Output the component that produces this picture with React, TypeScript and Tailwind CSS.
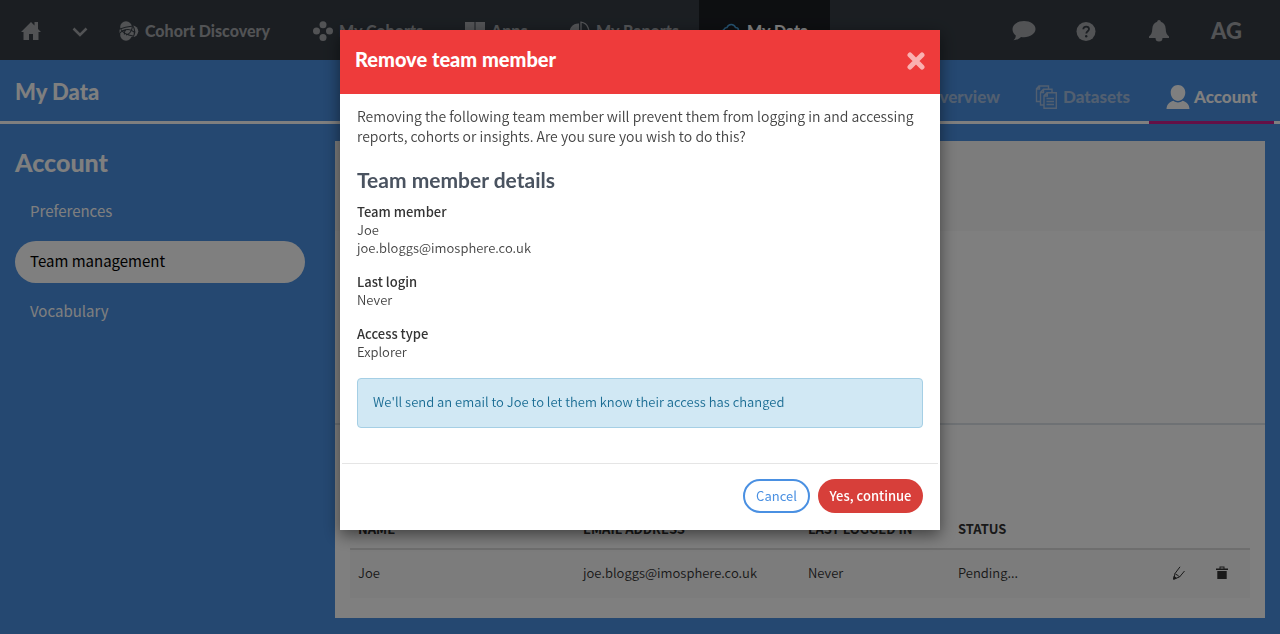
import React from "react";

const HEADING = "font-['Lato','Open_Sans',sans-serif]";
const BODY = "font-['Noto_Sans_CJK_SC','Open_Sans',sans-serif]";

const HomeIcon = () => (
  <svg className="h-5 w-5" viewBox="0 0 20 20" fill="currentColor">
    <path d="M10 1 0 11h2.500v8H8v-6h4v6h5.500v-8H20l-3-3V1h-3.500v3.500z" />
  </svg>
);

const ChevronIcon = () => (
  <svg className="h-4 w-4" viewBox="0 0 16 16" fill="none" stroke="currentColor" strokeWidth="2.500">
    <path d="M1.500 4.500 8 11l6.500-6.500" />
  </svg>
);

const DiscoveryIcon = () => (
  <svg className="h-5 w-5" viewBox="0 0 20 20">
    <g fill="currentColor">
      <circle cx="7" cy="6" r="5.800" />
      <circle cx="7" cy="14" r="5.800" />
      <circle cx="13.500" cy="10.300" r="5.800" />
      <path d="M.500 8h8v5h-8z" />
    </g>
    <g fill="none" stroke="#363d45" strokeWidth="1.100">
      <path d="M0 8.300c4-1.500 8-2.500 14-3.300M0 13.300c2-3 5-4.800 9-4.800 2.500 0 4.500 1 6 2.500M2 8.500c2 3.500 6 5.500 12 6.500M7 14c3.500-1 6-4 6.500-9M5.500 13.500c-.500-2 0-3.500 1.500-5" />
      <path d="M13.300 4c3 4 3 9 0 13" />
    </g>
  </svg>
);

const CohortsIcon = () => (
  <svg className="h-5 w-5" viewBox="0 0 20 20" fill="currentColor">
    <circle cx="10" cy="3.800" r="3.500" />
    <circle cx="3.500" cy="10" r="3.500" />
    <circle cx="16.500" cy="10" r="3.500" />
    <circle cx="10" cy="16.500" r="3.500" />
  </svg>
);

const AppsIcon = () => (
  <svg className="h-5 w-5" viewBox="0 0 20 20" fill="currentColor">
    <path d="M0 1h9.500v8.500H0zM10.500 1H20v8.500h-9.500zM0 10.500h9.500V19H0zM10.500 10.500H20V19h-9.500z" />
  </svg>
);

const ReportsIcon = () => (
  <svg className="h-5 w-5" viewBox="0 0 20 20">
    <path d="M9 2.500V11l6.500 6A9 9 0 1 1 9 2.500z" fill="currentColor" />
    <path d="M11 1.200V10l6 5.500A9 9 0 0 0 11 1.200z" fill="none" stroke="currentColor" strokeWidth="1.300" />
  </svg>
);

const CloudIcon = () => (
  <svg className="h-5 w-5 text-[#4aa3df]" viewBox="0 0 20 20" fill="none" stroke="currentColor" strokeWidth="1.500">
    <path d="M4.500 16a4 4 0 0 1-1.500-7.500A3 3 0 0 1 6 6.500a4.500 4.500 0 0 1 8.500 0 3 3 0 0 1 3 3A3.500 3.500 0 0 1 16 16z" />
  </svg>
);

const ChatIcon = () => (
  <svg className="h-5 w-6" viewBox="0 0 24 20" fill="currentColor">
    <path d="M12 0c6.300 0 11.500 3.500 11.500 8S18.300 16.200 12 16.200c-1 0-2-.100-3-.300C7 18 4.500 19 1.500 19.300c1.500-1.300 2.200-2.800 2.300-4.800C1.700 13 .500 10.700.500 8 .500 3.500 5.700 0 12 0z" />
  </svg>
);

const HelpIcon = () => (
  <svg className="h-5 w-5" viewBox="0 0 20 20">
    <circle cx="10" cy="10.500" r="9.500" fill="currentColor" />
    <path d="M7.300 8.300c0-3.600 5.700-3.400 5.700-.200 0 2.200-2.700 2.200-2.700 4.500" fill="none" stroke="#363d45" strokeWidth="1.800" />
    <circle cx="10.200" cy="15.200" r="1.200" fill="#363d45" />
  </svg>
);

const BellIcon = () => (
  <svg className="h-6 w-5" viewBox="0 0 20 24" fill="currentColor">
    <path d="M10 1c1 0 1.700.700 1.800 1.800 3 .900 4.700 3.400 4.900 7 .200 4 1 6 3.300 7.700V19h-6.500a3.500 3.500 0 0 1-7 0H0v-1.500C2.300 15.800 3.100 13.800 3.300 9.800c.200-3.600 1.900-6.100 4.900-7C8.300 1.700 9 1 10 1z" />
  </svg>
);

const DatasetsIcon = () => (
  <svg className="h-6 w-6" viewBox="0 0 24 24" fill="none" stroke="currentColor" strokeWidth="1.400">
    <path d="M12 7.700h9.300v15.600H9V10.700zM12.300 7.700v3.300H9M11.500 13.500h7.500M11.500 16.500h7.500M11.500 19.500h7.500" />
    <path d="M17 7.500V4.300H8.500l-3 3V20H9M8.500 4.500v3H5.500M13.500 4V1H4L1.500 3.800V16.500h4M4.500 1v3H1.500" />
  </svg>
);

const PersonIcon = () => (
  <svg className="h-6 w-6" viewBox="0 0 24 24" fill="currentColor">
    <path d="M12 0c4.300 0 7.300 3.200 7.300 7.500 0 4.600-3.300 8.500-7.300 8.500s-7.300-3.900-7.300-8.500C4.700 3.200 7.700 0 12 0zM.500 24c.200-4.300 2.700-6.900 6.900-8.200 2.900 2.200 6.300 2.200 9.200 0 4.200 1.300 6.700 3.900 6.900 8.200z" />
  </svg>
);

const PenIcon = () => (
  <svg className="h-[14px] w-3" viewBox="0 0 12 14" fill="none" stroke="currentColor" strokeWidth="1">
    <path d="M.800 13 2 7.500 7 .800M.800 13l5.700-2L11.500 5M2 7.500c1 1.700 3 1 4.500 3.500" />
    <path d="M.500 13.300 1.200 10l2 2.400z" fill="currentColor" />
  </svg>
);

const TrashIcon = () => (
  <svg className="h-[14px] w-3" viewBox="0 0 12 14" fill="currentColor">
    <path d="M0 2.500h3.500V.500h5v2H12V4H0zM4.500 1.500v1h3v-1zM1.300 5h9.400v8H1.300z" />
  </svg>
);

const CloseIcon = () => (
  <svg
    className="h-[18px] w-[18px]"
    viewBox="0 0 18 18"
    fill="none"
    stroke="currentColor"
    strokeWidth="5"
    strokeLinecap="round"
  >
    <path d="M3 3l12 12M15 3 3 15" />
  </svg>
);

const navItems = [
  { label: "Cohort Discovery", icon: <DiscoveryIcon />, width: "w-[194px]" },
  { label: "My Cohorts", icon: <CohortsIcon />, width: "w-[152px]" },
  { label: "Apps", icon: <AppsIcon />, width: "w-[105px]" },
  { label: "My Reports", icon: <ReportsIcon />, width: "w-[150px]" },
];

const TopNav = () => (
  <nav className={`flex h-[60px] items-center bg-[#363d45] text-[#a4a6aa] ${HEADING}`}>
    <a href="#home" aria-label="Home" className="ml-[21px] pt-[2px]">
      <HomeIcon />
    </a>
    <button aria-label="Switch workspace" className="ml-[31px] mt-1">
      <ChevronIcon />
    </button>
    <div className="ml-[10px] flex h-full">
      {navItems.map((item) => (
        <a
          key={item.label}
          href="#nav"
          className={`flex items-center gap-[6px] whitespace-nowrap pl-[21px] pt-[2px] text-base font-black ${item.width}`}
        >
          {item.icon}
          {item.label}
        </a>
      ))}
      <a
        href="#data"
        className="flex w-[131px] items-center gap-[6px] whitespace-nowrap bg-[#1b1e23] pl-[22px] pt-[2px] text-base font-black text-white"
      >
        <CloudIcon />
        My Data
      </a>
    </div>
    <div className="ml-auto flex items-center pr-[38px] pt-[2px]">
      <button aria-label="Messages" className="mr-10">
        <ChatIcon />
      </button>
      <button aria-label="Help" className="mr-[53px]">
        <HelpIcon />
      </button>
      <button aria-label="Notifications" className="mr-[42px]">
        <BellIcon />
      </button>
      <button className="text-[22px] font-black leading-6">AG</button>
    </div>
  </nav>
);

const SubNav = () => (
  <header className={`flex h-16 items-stretch justify-between border-b-[3px] border-white ${HEADING}`}>
    <h1 className="pl-[15px] pt-4 text-[22px] font-black leading-8 text-white">My Data</h1>
    <div className="-mb-[3px] mr-[6px] flex text-[17px] font-black text-[#a4bfe0]">
      <a href="#overview" className="flex items-center pr-[18px] pt-[10px]">
        Overview
      </a>
      <a href="#datasets" className="flex w-[131px] items-center gap-1 pl-[17px] pt-[10px]">
        <DatasetsIcon />
        Datasets
      </a>
      <a
        href="#account"
        className="flex w-[125px] items-center gap-1 border-b-[3px] border-[#c8208c] pl-[17px] pt-[13px] text-white"
      >
        <PersonIcon />
        Account
      </a>
    </div>
  </header>
);

const Sidebar = () => (
  <aside className="w-[305px] shrink-0 pl-[15px] text-white">
    <h2 className={`pt-[22px] text-[25px] font-black leading-8 ${HEADING}`}>Account</h2>
    <ul className="mt-[13px] flex flex-col gap-2 text-[15px] leading-10">
      <li>
        <a href="#preferences" className="block rounded-full px-[15px] pb-[2px]">
          Preferences
        </a>
      </li>
      <li>
        <a href="#team" className="block rounded-full bg-white px-[15px] pb-[2px] text-black">
          Team management
        </a>
      </li>
      <li>
        <a href="#vocabulary" className="block rounded-full px-[15px] pb-[2px]">
          Vocabulary
        </a>
      </li>
    </ul>
  </aside>
);

const TeamPanel = () => (
  <main className="ml-[30px] mr-[15px] mt-[17px] flex-1 bg-white pb-5">
    <div className="h-[90px] bg-[#f9f9f9]" />
    <div className="h-[194px] border-b-2 border-[#dde3e8]" />
    <div className="px-[15px] pt-[85px]">
      <table className="w-full table-fixed text-left text-[13px] text-[#333]">
        <thead>
          <tr className="h-[39px] border-b-2 border-[#ddd] uppercase">
            <th className="w-1/4 px-2 font-bold">Name</th>
            <th className="w-1/4 px-2 font-bold">Email address</th>
            <th className="w-1/6 px-2 font-bold">Last logged in</th>
            <th className="w-1/6 px-2 font-bold">Status</th>
            <th className="w-1/6" aria-label="Actions" />
          </tr>
        </thead>
        <tbody>
          <tr className="h-[49px] bg-[#f9f9f9] font-[350]">
            <td className="px-2 pb-[3px]">Joe</td>
            <td className="px-2 pb-[3px]">joe.bloggs@imosphere.co.uk</td>
            <td className="px-2 pb-[3px]">Never</td>
            <td className="px-2 pb-[3px]">Pending...</td>
            <td className="pb-[3px]">
              <div className="flex justify-end gap-[31px] pr-[22px]">
                <button aria-label="Edit">
                  <PenIcon />
                </button>
                <button aria-label="Delete">
                  <TrashIcon />
                </button>
              </div>
            </td>
          </tr>
        </tbody>
      </table>
    </div>
  </main>
);

const RemoveMemberModal = () => (
  <div className="fixed inset-0 flex items-start justify-center bg-black/50 pt-[30px]">
    <div
      role="dialog"
      aria-labelledby="modal-title"
      className="w-[600px] bg-white text-[#444] shadow-[0_5px_15px_rgba(0,0,0,0.5)]"
    >
      <div className="flex h-16 items-start justify-between bg-[#ee3b3b] px-[15px] pt-[15px]">
        <h2 id="modal-title" className={`text-xl font-black leading-7 text-white ${HEADING}`}>
          Remove team member
        </h2>
        <button aria-label="Close" className="mt-[7px] text-[#fab1b1]">
          <CloseIcon />
        </button>
      </div>
      <div className="px-[17px] pb-[35px] pt-3 text-[13px] font-[350] leading-[18px]">
        <p className="text-sm font-[350] leading-5">
          Removing the following team member will prevent them from logging in and accessing reports, cohorts or
          insights. Are you sure you wish to do this?
        </p>
        <h3 className={`mt-5 text-[21px] font-bold leading-7 text-[#4a5360] ${HEADING}`}>Team member details</h3>
        <dl className="mt-[9px]">
          <dt className="font-medium text-[#333]">Team member</dt>
          <dd>Joe</dd>
          <dd>joe.bloggs@imosphere.co.uk</dd>
          <dt className="mt-4 font-medium text-[#333]">Last login</dt>
          <dd>Never</dd>
          <dt className="mt-4 font-medium text-[#333]">Access type</dt>
          <dd>Explorer</dd>
        </dl>
        <div className="mt-[17px] rounded-[4px] border border-[#a5cfe5] bg-[#d1e8f4] px-[15px] pb-4 pt-[14px] text-[#1b6d94]">
          We'll send an email to Joe to let them know their access has changed
        </div>
      </div>
      <div className="mx-[2px] flex justify-end gap-2 border-t border-[#e5e5e5] px-[15px] pb-[17px] pt-[15px] text-[13px]">
        <button className="h-[34px] w-[67px] rounded-full border-2 border-[#4a90e2] pb-px text-[#4a90e2]">
          Cancel
        </button>
        <button className="h-[34px] w-[105px] rounded-full bg-[#d73f3a] pb-px font-medium text-white">
          Yes, continue
        </button>
      </div>
    </div>
  </div>
);

export default function App() {
  return (
    <div className={`min-h-screen bg-[#4a90e2] pb-4 ${BODY}`}>
      <TopNav />
      <SubNav />
      <div className="flex items-start">
        <Sidebar />
        <TeamPanel />
      </div>
      <RemoveMemberModal />
    </div>
  );
}
